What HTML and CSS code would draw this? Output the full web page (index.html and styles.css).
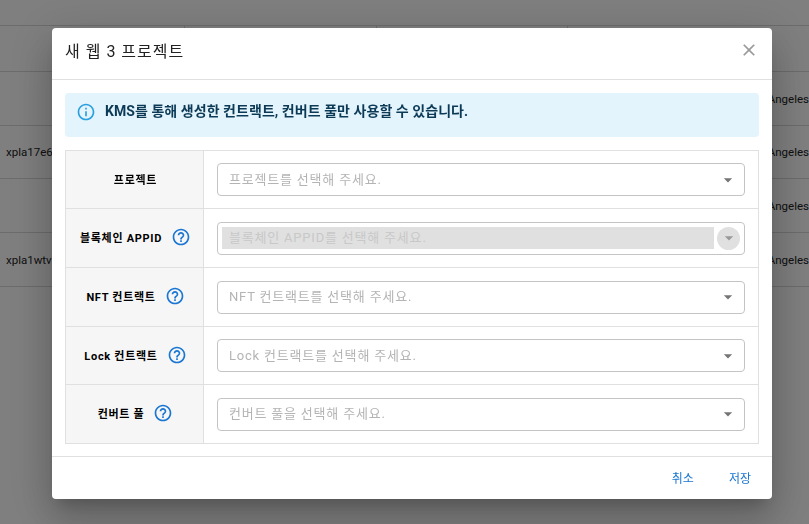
FILE: index.html
```html
<!DOCTYPE html>
<html lang="ko">
<head>
<meta charset="utf-8">
<title>새 웹 3 프로젝트</title>
<link rel="stylesheet" href="styles.css">
</head>
<body>
<main class="page">
  <div class="row-head"><span></span><span></span><span></span><span></span></div>
  <div class="row"><span></span><span class="tz">Angeles</span></div>
  <div class="row"><span>xpla17e6</span><span class="tz">Angeles</span></div>
  <div class="row"><span></span><span class="tz">Angeles</span></div>
  <div class="row"><span>xpla1wtv</span><span class="tz">Angeles</span></div>
</main>
<div class="backdrop"></div>
<section class="dialog">
  <header class="dialog-head">
    <h2 class="dialog-title">새 웹 3 프로젝트</h2>
    <svg class="close" viewBox="0 0 24 24"><path d="M19 6.41L17.59 5 12 10.59 6.41 5 5 6.41 10.59 12 5 17.59 6.41 19 12 13.41 17.59 19 19 17.59 13.41 12z"/></svg>
  </header>
  <div class="dialog-body">
    <div class="alert">
      <svg class="alert-icon" viewBox="0 0 24 24"><path d="M11 7h2v2h-2zm0 4h2v6h-2zm1-9C6.48 2 2 6.48 2 12s4.48 10 10 10 10-4.48 10-10S17.52 2 12 2zm0 18c-4.41 0-8-3.59-8-8s3.59-8 8-8 8 3.59 8 8-3.59 8-8 8z"/></svg>
      <p class="alert-text">KMS를 통해 생성한 컨트랙트, 컨버트 풀만 사용할 수 있습니다.</p>
    </div>
    <div class="form-table">
      <div class="form-row">
        <div class="label-cell"><span class="label">프로젝트</span></div>
        <div class="field-cell">
          <div class="select"><span class="placeholder">프로젝트를 선택해 주세요.</span><svg class="arrow" viewBox="0 0 24 24"><path d="M7 10l5 5 5-5z"/></svg></div>
        </div>
      </div>
      <div class="form-row">
        <div class="label-cell"><span class="label">블록체인 APPID</span><svg class="help" viewBox="0 0 24 24"><path d="M11 18h2v-2h-2v2zm1-16C6.48 2 2 6.48 2 12s4.48 10 10 10 10-4.48 10-10S17.52 2 12 2zm0 18c-4.41 0-8-3.59-8-8s3.59-8 8-8 8 3.59 8 8-3.59 8-8 8zm0-14c-2.21 0-4 1.79-4 4h2c0-1.1.9-2 2-2s2 .9 2 2c0 2-3 1.75-3 5h2c0-2.25 3-2.5 3-5 0-2.21-1.79-4-4-4z"/></svg></div>
        <div class="field-cell">
          <div class="select select-disabled"><span class="placeholder">블록체인 APPID를 선택해 주세요.</span><span class="arrow-disc"><svg class="arrow" viewBox="0 0 24 24"><path d="M7 10l5 5 5-5z"/></svg></span></div>
        </div>
      </div>
      <div class="form-row">
        <div class="label-cell"><span class="label">NFT 컨트랙트</span><svg class="help" viewBox="0 0 24 24"><path d="M11 18h2v-2h-2v2zm1-16C6.48 2 2 6.48 2 12s4.48 10 10 10 10-4.48 10-10S17.52 2 12 2zm0 18c-4.41 0-8-3.59-8-8s3.59-8 8-8 8 3.59 8 8-3.59 8-8 8zm0-14c-2.21 0-4 1.79-4 4h2c0-1.1.9-2 2-2s2 .9 2 2c0 2-3 1.75-3 5h2c0-2.25 3-2.5 3-5 0-2.21-1.79-4-4-4z"/></svg></div>
        <div class="field-cell">
          <div class="select"><span class="placeholder">NFT 컨트랙트를 선택해 주세요.</span><svg class="arrow" viewBox="0 0 24 24"><path d="M7 10l5 5 5-5z"/></svg></div>
        </div>
      </div>
      <div class="form-row">
        <div class="label-cell"><span class="label">Lock 컨트랙트</span><svg class="help" viewBox="0 0 24 24"><path d="M11 18h2v-2h-2v2zm1-16C6.48 2 2 6.48 2 12s4.48 10 10 10 10-4.48 10-10S17.52 2 12 2zm0 18c-4.41 0-8-3.59-8-8s3.59-8 8-8 8 3.59 8 8-3.59 8-8 8zm0-14c-2.21 0-4 1.79-4 4h2c0-1.1.9-2 2-2s2 .9 2 2c0 2-3 1.75-3 5h2c0-2.25 3-2.5 3-5 0-2.21-1.79-4-4-4z"/></svg></div>
        <div class="field-cell">
          <div class="select"><span class="placeholder">Lock 컨트랙트를 선택해 주세요.</span><svg class="arrow" viewBox="0 0 24 24"><path d="M7 10l5 5 5-5z"/></svg></div>
        </div>
      </div>
      <div class="form-row">
        <div class="label-cell"><span class="label">컨버트 풀</span><svg class="help" viewBox="0 0 24 24"><path d="M11 18h2v-2h-2v2zm1-16C6.48 2 2 6.48 2 12s4.48 10 10 10 10-4.48 10-10S17.52 2 12 2zm0 18c-4.41 0-8-3.59-8-8s3.59-8 8-8 8 3.59 8 8-3.59 8-8 8zm0-14c-2.21 0-4 1.79-4 4h2c0-1.1.9-2 2-2s2 .9 2 2c0 2-3 1.75-3 5h2c0-2.25 3-2.5 3-5 0-2.21-1.79-4-4-4z"/></svg></div>
        <div class="field-cell">
          <div class="select"><span class="placeholder">컨버트 풀을 선택해 주세요.</span><svg class="arrow" viewBox="0 0 24 24"><path d="M7 10l5 5 5-5z"/></svg></div>
        </div>
      </div>
    </div>
  </div>
  <footer class="dialog-foot">
    <button class="btn">취소</button>
    <button class="btn">저장</button>
  </footer>
</section>
</body>
</html>
```
FILE: styles.css
```css
* { box-sizing: border-box; }
html, body { margin: 0; height: 100%; overflow: hidden; }
body {
  background: #fff;
  font-family: Roboto, "Noto Sans CJK KR", "Liberation Sans", sans-serif;
  color: #222;
}
.page { padding-top: 25px; }
.row-head {
  height: 47px;
  border-top: 1px solid #d8d8d8;
  border-bottom: 1px solid #d8d8d8;
  display: grid;
  grid-template-columns: 185px 192px 191px 1fr;
}
.row-head span { height: 4px; border-right: 1px solid #d8d8d8; }
.row-head span:last-child { border-right: 0; }
.row {
  height: 54px;
  display: flex;
  justify-content: space-between;
  align-items: center;
  border-bottom: 1px solid #d8d8d8;
  padding: 0 0 0 6px;
  font-size: 11.5px;
}
.row:nth-child(3) { height: 53px; }
.tz { white-space: nowrap; }
.backdrop {
  position: fixed;
  inset: 0;
  background: rgba(0, 0, 0, 0.5);
}
.dialog {
  position: fixed;
  left: 52px;
  top: 28px;
  width: 720px;
  height: 471px;
  background: #fff;
  border-radius: 4px;
  box-shadow: 0 11px 15px -7px rgba(0,0,0,.2), 0 24px 38px 3px rgba(0,0,0,.14), 0 9px 46px 8px rgba(0,0,0,.12);
  display: flex;
  flex-direction: column;
}
.dialog-head {
  flex: none;
  height: 52px;
  border-bottom: 1px solid #e0e0e0;
  display: flex;
  align-items: center;
  justify-content: space-between;
  padding: 0 13px 7px;
}
.dialog-title {
  margin: 0;
  font-size: 16px;
  font-weight: 400;
  letter-spacing: 1px;
  color: #222;
}
.close { width: 20px; height: 20px; fill: #999; margin-top: 0; }
.dialog-body {
  padding: 13px 13px 12px;
  flex: 1;
  display: flex;
  flex-direction: column;
  gap: 13px;
}
.alert {
  height: 44px;
  flex: none;
  background: #e3f4fc;
  border-radius: 4px;
  display: flex;
  align-items: flex-start;
  padding: 9px 11px;
  gap: 9px;
}
.alert-icon { width: 20px; height: 20px; fill: #2b9fe0; flex: none; }
.alert-text {
  margin: 0;
  font-size: 14px;
  line-height: 19px;
  font-weight: 700;
  color: #0c3a56;
  letter-spacing: .05px;
}
.form-table { flex: none; border: 1px solid #e0e0e0; border-bottom: 0; }
.form-row {
  height: 59px;
  display: grid;
  grid-template-columns: 138px 1fr;
  border-bottom: 1px solid #e0e0e0;
}
.form-row:nth-child(3n+1) { height: 58px; }
.label-cell {
  background: #f6f6f6;
  border-right: 1px solid #e0e0e0;
  display: flex;
  align-items: center;
  justify-content: center;
  gap: 9px;
  padding: 0 0 2px 2px;
}
.label { font-size: 11px; font-weight: 700; color: #000; letter-spacing: .7px; }
.help { width: 20px; height: 20px; fill: #1976d2; flex: none; }
.field-cell { display: flex; align-items: center; padding: 0 13px 0 13px; }
.select {
  width: 100%;
  height: 33px;
  border: 1px solid #c4c4c4;
  border-radius: 4px;
  display: flex;
  align-items: center;
  justify-content: space-between;
  padding: 0 6px 0 11px;
}
.placeholder { font-size: 13px; color: #b4b4b4; letter-spacing: .8px; margin-bottom: 3px; }
.arrow { width: 20px; height: 20px; fill: #757575; flex: none; }
.select-disabled { padding: 4px; }
.select-disabled .placeholder {
  flex: 1;
  background: #e0e0e0;
  height: 22px;
  line-height: 22px;
  padding-left: 7px;
  margin-bottom: 0;
  color: #c8c8c8;
}
.arrow-disc {
  width: 23px;
  height: 23px;
  border-radius: 50%;
  background: #e0e0e0;
  margin-left: 3px;
  display: flex;
  align-items: center;
  justify-content: center;
}
.arrow-disc .arrow { fill: #999; }
.dialog-foot {
  flex: none;
  height: 43px;
  border-top: 1px solid #e0e0e0;
  display: flex;
  align-items: center;
  justify-content: flex-end;
  gap: 35px;
  padding: 0 21px 2px 0;
}
.btn {
  border: 0;
  background: none;
  padding: 0;
  font: inherit;
  font-size: 12px;
  color: #1976d2;
}
```
